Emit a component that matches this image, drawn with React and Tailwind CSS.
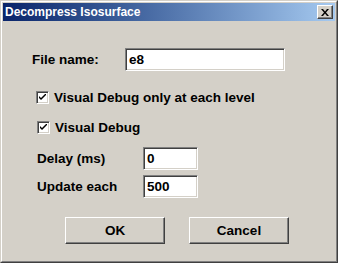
const font = { fontFamily: '"Liberation Sans", Arial, sans-serif' }

const sunken = 'border border-t-[#808080] border-l-[#808080] border-r-white border-b-white shadow-[inset_1px_1px_0_#404040,inset_-1px_-1px_0_#d4d0c8]'
const raised = 'border border-t-white border-l-white border-r-[#404040] border-b-[#404040] shadow-[inset_-1px_-1px_0_#808080,inset_1px_1px_0_#d4d0c8]'

const Checkbox = () => (
  <div className={`w-[13px] h-[13px] shrink-0 bg-white flex items-center justify-center ${sunken}`}>
    <svg width="7" height="7" viewBox="0 0 7 7">
      <path d="M0 2 L0 4 L2 6 L7 1 L7 -1 L2 4 Z" fill="#000" />
    </svg>
  </div>
)

const TextBox = ({ value, className }) => (
  <div className={`h-[23px] bg-white flex items-center pl-[3px] text-[13.5px] font-bold text-black ${sunken} ${className}`}>
    {value}
  </div>
)

const Button = ({ label, className }) => (
  <div className={`h-[27px] w-[100px] flex items-center justify-center bg-[#d4d0c8] text-[13.5px] font-bold text-black ${raised} ${className}`}>
    {label}
  </div>
)

export default function App() {
  return (
    <div style={font} className="w-[338px] h-[263px] border border-t-[#d4d0c8] border-l-[#d4d0c8] border-r-[#404040] border-b-[#404040]">
      <div className="h-full bg-[#d4d0c8] border border-t-white border-l-white border-r-[#808080] border-b-[#808080] p-px flex flex-col">
        {/* title bar */}
        <div className="h-[18px] shrink-0 bg-gradient-to-r from-[#0a246a] to-[#a6caf0] flex items-center justify-between pl-[2px] pr-[2px]">
          <span className="text-white font-bold text-[12px] leading-none">Decompress Isosurface</span>
          <div className={`w-[16px] h-[14px] bg-[#d4d0c8] flex items-center justify-center ${raised}`}>
            <svg width="8" height="7" viewBox="0 0 8 7">
              <path d="M0 0h2l2 2.5L6 0h2L5 3.5 8 7H6L4 4.5 2 7H0l3-3.5z" fill="#000" />
            </svg>
          </div>
        </div>

        <div className="flex flex-col text-[13.5px] leading-[13px] font-bold text-black">
          <div className="flex items-center h-[23px] mt-[27px]">
            <span className="ml-[29px] w-[93px]">File name:</span>
            <TextBox value="e8" className="w-[160px]" />
          </div>

          <div className="flex items-center h-[13px] gap-[5px] mt-[20px] ml-[33px]">
            <Checkbox />
            <span className="whitespace-nowrap">Visual Debug only at each level</span>
          </div>

          <div className="flex items-center h-[13px] gap-[5px] mt-[17px] ml-[34px]">
            <Checkbox />
            <span>Visual Debug</span>
          </div>

          <div className="flex items-center h-[23px] mt-[13px]">
            <span className="ml-[34px] w-[106px]">Delay (ms)</span>
            <TextBox value="0" className="w-[55px]" />
          </div>

          <div className="flex items-center h-[23px] mt-[5px]">
            <span className="ml-[34px] w-[106px]">Update each</span>
            <TextBox value="500" className="w-[55px]" />
          </div>

          <div className="flex mt-[19px] ml-[62px] gap-[24px]">
            <Button label="OK" />
            <Button label="Cancel" />
          </div>
        </div>
      </div>
    </div>
  )
}
